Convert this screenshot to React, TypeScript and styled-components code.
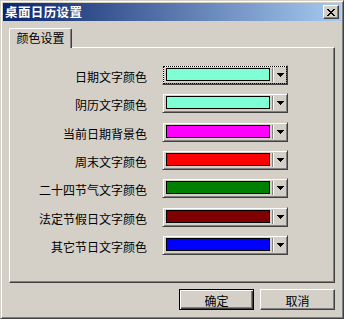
import { Fragment } from "react";
import styled, { createGlobalStyle } from "styled-components";

const GlobalStyle = createGlobalStyle`
  html, body {
    margin: 0;
    padding: 0;
    background: #d4d0c8;
  }
  body {
    font-family: "Noto Sans CJK SC", "Liberation Sans", sans-serif;
    font-size: 12px;
    color: #000;
  }
`;

const Window = styled.div`
  box-sizing: border-box;
  width: 344px;
  height: 319px;
  background: #d4d0c8;
  border: 1px solid;
  border-color: #d4d0c8 #404040 #404040 #d4d0c8;
  box-shadow: inset 1px 1px #fff, inset -1px -1px #808080;
  padding: 2px;
  display: flex;
  flex-direction: column;
`;

const TitleBar = styled.div`
  height: 18px;
  flex: none;
  display: flex;
  align-items: center;
  justify-content: space-between;
  padding: 0 2px;
  background: linear-gradient(to right, #0a246a, #a6caf0);
`;

const Title = styled.span`
  color: #fff;
  font-weight: bold;
  font-size: 12.5px;
  letter-spacing: 0.4px;
  line-height: 18px;
`;

const CloseButton = styled.div`
  box-sizing: border-box;
  width: 16px;
  height: 14px;
  background: #d4d0c8;
  border: 1px solid;
  border-color: #fff #404040 #404040 #fff;
  box-shadow: inset -1px -1px #808080;
  display: flex;
  align-items: center;
  justify-content: center;
`;

const Body = styled.div`
  padding: 7px 6px 0 6px;
`;

const TabStrip = styled.div`
  display: flex;
`;

const Tab = styled.div`
  position: relative;
  z-index: 1;
  box-sizing: border-box;
  width: 63px;
  height: 20px;
  margin-bottom: -1px;
  background: #d4d0c8;
  border: 1px solid;
  border-color: #fff #404040 transparent #fff;
  border-bottom: none;
  border-radius: 2px 2px 0 0;
  box-shadow: inset -1px 0 #808080;
  text-align: center;
  line-height: 17px;
`;

const Panel = styled.div`
  box-sizing: border-box;
  height: 236px;
  border: 1px solid;
  border-color: #fff #404040 #404040 #fff;
  box-shadow: inset -1px -1px #808080;
  padding-top: 17px;
  display: grid;
  grid-template-columns: 137px 126px;
  grid-auto-rows: 20px;
  column-gap: 15px;
  row-gap: 8.333px;
  align-content: start;
`;

const Label = styled.span`
  text-align: right;
  line-height: 14px;
  padding-top: 5px;
  white-space: nowrap;
`;

const Combo = styled.div<{ $focused?: boolean }>`
  position: relative;
  box-sizing: border-box;
  height: 20px;
  display: flex;
  border: 1px solid;
  border-color: #d4d0c8 #404040 #404040 #d4d0c8;
  box-shadow: inset 1px 1px #fff, inset -1px -1px #808080;
  padding: 2px 1px 3px 3px;

  &::after {
    content: "";
    display: ${({ $focused }) => ($focused ? "block" : "none")};
    position: absolute;
    inset: 0;
    border: 1px dotted #000;
  }
`;

const Swatch = styled.div<{ $color: string }>`
  box-sizing: border-box;
  width: 104px;
  height: 13px;
  margin-right: 3px;
  border: 1px solid #000;
  background: ${({ $color }) => $color};
`;

const DropButton = styled.div`
  box-sizing: border-box;
  width: 13px;
  margin-bottom: -1px;
  border-left: 1px solid #fff;
  box-shadow: -1px 0 #808080;
  display: flex;
  align-items: center;
  justify-content: center;
  padding-left: 1px;
`;

const ButtonRow = styled.div`
  display: flex;
  justify-content: flex-end;
  gap: 6px;
  margin-top: 6px;
`;

const Button = styled.div<{ $default?: boolean }>`
  box-sizing: border-box;
  width: 75px;
  height: 21px;
  display: flex;
  align-items: center;
  justify-content: center;
  background: #d4d0c8;
  border: 1px solid;
  border-color: ${({ $default }) =>
    $default ? "#000" : "#fff #404040 #404040 #fff"};
  box-shadow: ${({ $default }) =>
    $default
      ? "inset 1px 1px #fff, inset -1px -1px #404040, inset -2px -2px #808080"
      : "inset -1px -1px #808080"};
  padding-top: 1px;
`;

const CloseIcon = () => (
  <svg width="8" height="7" viewBox="0 0 8 7" shapeRendering="crispEdges">
    <path
      fill="#000"
      d="M0 0h2v1H0zM6 0h2v1H6zM1 1h2v1H1zM5 1h2v1H5zM2 2h4v1H2zM3 3h2v1H3zM2 4h4v1H2zM1 5h2v1H1zM5 5h2v1H5zM0 6h2v1H0zM6 6h2v1H6z"
    />
  </svg>
);

const Arrow = () => (
  <svg width="7" height="4" viewBox="0 0 7 4" shapeRendering="crispEdges">
    <path fill="#000" d="M0 0h7v1H0zM1 1h5v1H1zM2 2h3v1H2zM3 3h1v1H3z" />
  </svg>
);

const rows = [
  { label: "日期文字颜色", color: "#7fffd4" },
  { label: "阴历文字颜色", color: "#7fffd4" },
  { label: "当前日期背景色", color: "#ff00ff" },
  { label: "周末文字颜色", color: "#ff0000" },
  { label: "二十四节气文字颜色", color: "#008000" },
  { label: "法定节假日文字颜色", color: "#800000" },
  { label: "其它节日文字颜色", color: "#0000ff" },
];

export default function App() {
  return (
    <>
      <GlobalStyle />
      <Window>
        <TitleBar>
          <Title>桌面日历设置</Title>
          <CloseButton>
            <CloseIcon />
          </CloseButton>
        </TitleBar>
        <Body>
          <TabStrip>
            <Tab>颜色设置</Tab>
          </TabStrip>
          <Panel>
            {rows.map((r, i) => (
              <Fragment key={r.label}>
                <Label>{r.label}</Label>
                <Combo $focused={i === 0}>
                  <Swatch $color={r.color} />
                  <DropButton>
                    <Arrow />
                  </DropButton>
                </Combo>
              </Fragment>
            ))}
          </Panel>
          <ButtonRow>
            <Button $default>确定</Button>
            <Button>取消</Button>
          </ButtonRow>
        </Body>
      </Window>
    </>
  );
}
